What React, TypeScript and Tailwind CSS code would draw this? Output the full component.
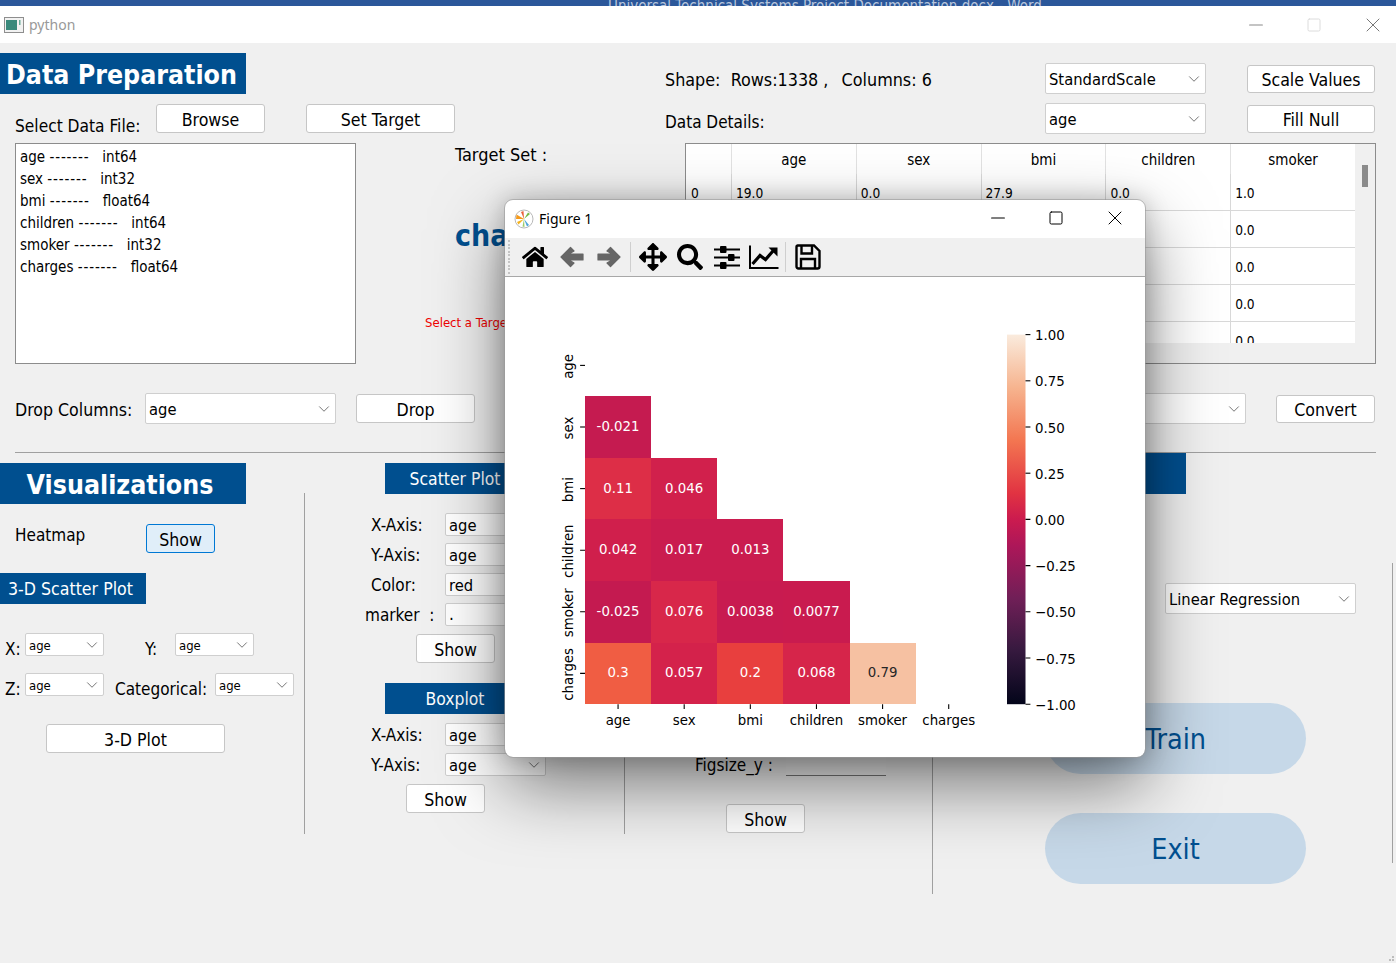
import React from 'react';
import { ChevronDown, Minus, Square, X } from 'lucide-react';
import { FaArrowsAlt, FaHome, FaSearch } from 'react-icons/fa';

const columnsList = [
  ['age', 'int64'],
  ['sex', 'int32'],
  ['bmi', 'float64'],
  ['children', 'int64'],
  ['smoker', 'int32'],
  ['charges', 'float64'],
];

const tableHeaders = ['age', 'sex', 'bmi', 'children', 'smoker'];
const tableRows = [
  ['19.0', '0.0', '27.9', '0.0', '1.0'],
  ['18.0', '1.0', '33.77', '1.0', '0.0'],
  ['28.0', '1.0', '33.0', '3.0', '0.0'],
  ['33.0', '1.0', '22.705', '0.0', '0.0'],
  ['32.0', '1.0', '28.88', '0.0', '0.0'],
];

const labels = ['age', 'sex', 'bmi', 'children', 'smoker', 'charges'];

// value, cell colour
const heatmap: [string, string][][] = [
  [],
  [['-0.021', '#c51b50']],
  [['0.11', '#dd2e47'], ['0.046', '#d1204c']],
  [['0.042', '#d01f4c'], ['0.017', '#ca1c4f'], ['0.013', '#ca1c4f']],
  [['-0.025', '#c41a50'], ['0.076', '#d8274a'], ['0.0038', '#c81b50'], ['0.0077', '#c91b4f']],
  [['0.3', '#f05d43'], ['0.057', '#d4224b'], ['0.2', '#e83f3e'], ['0.068', '#d6254a'], ['0.79', '#f6c1a2']],
];

const colorbarTicks = ['1.00', '0.75', '0.50', '0.25', '0.00', '\u22120.25', '\u22120.50', '\u22120.75', '\u22121.00'];

const Btn = ({ className, children }: { className: string; children: React.ReactNode }) => (
  <button className={`h-[29px] pt-[4px] bg-white border border-[#c6c6c6] rounded-[3px] text-[17.6px] leading-none text-black ${className}`}>
    {children}
  </button>
);

const Combo = ({ value, className, small }: { value: string; className: string; small?: boolean }) => (
  <div className={`flex items-center justify-between bg-white border border-[#cfcfcf] rounded-[2px] ${className}`}>
    <span className={small ? 'pl-[3px] pt-[2px] text-[13px]' : 'pl-[3px] pt-[4px] text-[16.4px]'}>{value}</span>
    <ChevronDown size={18} strokeWidth={0.9} className="mr-[2px] text-[#333] shrink-0" />
  </div>
);

const Banner = ({ className, children }: { className: string; children?: React.ReactNode }) => (
  <div className={`flex items-center justify-center pt-[2px] bg-[#004f8f] text-white ${className}`}>{children}</div>
);

const FieldRow = ({ label, value, className, combo }: { label: string; value: string; className: string; combo?: boolean }) => (
  <div className={`flex h-[23px] ${className}`}>
    <span className="ml-[66px] w-[74px] pt-[1px] whitespace-nowrap leading-[23px]">{label}</span>
    {combo ? (
      <Combo value={value} className="w-[101px] h-[23px]" />
    ) : (
      <div className="w-[101px] h-[23px] bg-white border border-[#cfcfcf] rounded-[2px] pl-[3px] pt-[1px] text-[16.4px] leading-[21px]">{value}</div>
    )}
  </div>
);

const ArrowIcon = ({ flip }: { flip?: boolean }) => (
  <svg width="26" height="24" viewBox="0 0 26 24" className={flip ? '-scale-x-100' : ''}>
    <path d="M2 12 L11.5 2.5 L15 6 L10 9 H24 V15 H10 L15 18 L11.5 21.5 Z" fill="#666" stroke="#666" strokeWidth="1.2" strokeLinejoin="round" />
  </svg>
);

const SlidersIcon = () => (
  <svg width="26" height="26" viewBox="0 0 26 26" fill="black">
    <rect x="0" y="4.5" width="26" height="2" />
    <rect x="0" y="12.5" width="26" height="2" />
    <rect x="0" y="20.5" width="26" height="2" />
    <rect x="6" y="2" width="6.5" height="7" rx="1" />
    <rect x="14" y="10" width="6.5" height="7" rx="1" />
    <rect x="6" y="18" width="6.5" height="7" rx="1" />
  </svg>
);

const ChartIcon = () => (
  <svg width="30" height="26" viewBox="0 0 30 26" fill="none" stroke="black">
    <path d="M1 1.5 V24 H29.5" strokeWidth="2" />
    <path d="M3.5 20 L11 11.5 L16.5 15.5 L24 7" strokeWidth="3.2" />
    <path d="M19.5 3.5 H28.5 V12.5 Z" fill="black" stroke="none" />
  </svg>
);

const SaveIcon = () => (
  <svg width="26" height="26" viewBox="0 0 26 26" fill="none" stroke="black" strokeWidth="2.4">
    <path d="M2.2 1.5 H19 L24.5 7 V22.5 Q24.5 24.5 22.5 24.5 H3.5 Q1.5 24.5 1.5 22.5 V3 Q1.5 1.5 3 1.5 Z" />
    <path d="M6.5 2 V9.5 H17 V2" />
    <path d="M6 24 V15 H20 V24" />
  </svg>
);

const MplLogo = () => (
  <svg width="20" height="20" viewBox="0 0 20 20">
    <circle cx="10" cy="10" r="9" fill="white" stroke="#b8b8b8" strokeWidth="1" />
    <path d="M10 10 L2.5 5.5 L2 10 Z" fill="#f59a1b" />
    <path d="M10 10 L3 13 L4.5 15.5 Z" fill="#f5b31b" />
    <path d="M10 10 L7 3 L9.5 2 Z" fill="#e9603a" />
    <path d="M10 10 L16 5 L14 3.5 Z" fill="#76b947" />
    <path d="M10 10 L13 17.5 L15 16 Z" fill="#4ea5d9" />
    <path d="M10 10 L8.5 17.5 L10.5 18 Z" fill="#9ccc65" />
  </svg>
);

const HeatmapChart = () => {
  const left = 80;
  const top = 57.6;
  const cellW = 66.13;
  const cellH = 61.6;
  const gx = (c: number) => Math.round(left + c * cellW);
  const gy = (r: number) => Math.round(top + r * cellH);
  return (
    <svg width="640" height="480" viewBox="0 0 640 480" className="block" fontFamily="'DejaVu Sans', sans-serif" fontSize="13.33">
      <defs>
        <linearGradient id="rocket" x1="0" y1="1" x2="0" y2="0">
          <stop offset="0" stopColor="#03051a" />
          <stop offset="0.143" stopColor="#35193e" />
          <stop offset="0.286" stopColor="#701f57" />
          <stop offset="0.429" stopColor="#ad1759" />
          <stop offset="0.5" stopColor="#cb1b4f" />
          <stop offset="0.571" stopColor="#e13342" />
          <stop offset="0.714" stopColor="#f37651" />
          <stop offset="0.857" stopColor="#f6b48f" />
          <stop offset="1" stopColor="#faebdd" />
        </linearGradient>
      </defs>
      {heatmap.map((row, r) =>
        row.map(([value, color], c) => (
          <g key={`${r}-${c}`}>
            <rect x={gx(c)} y={gy(r)} width={gx(c + 1) - gx(c)} height={gy(r + 1) - gy(r)} fill={color} />
            <text
              x={left + (c + 0.5) * cellW}
              y={top + (r + 0.5) * cellH + 4}
              textAnchor="middle"
              fill={value === '0.79' ? '#262626' : 'white'}
            >
              {value}
            </text>
          </g>
        ))
      )}
      {labels.map((label, i) => (
        <g key={label}>
          <line x1={left - 4.9} x2={left} y1={top + (i + 0.5) * cellH} y2={top + (i + 0.5) * cellH} stroke="black" strokeWidth="1.1" />
          <text
            textAnchor="middle"
            transform={`translate(68 ${top + (i + 0.5) * cellH + 1}) rotate(-90)`}
            fill="#000"
          >
            {label}
          </text>
          <line x1={left + (i + 0.5) * cellW} x2={left + (i + 0.5) * cellW} y1={427.2} y2={432} stroke="black" strokeWidth="1.1" />
          <text x={left + (i + 0.5) * cellW} y={448} textAnchor="middle" fill="#000">
            {label}
          </text>
        </g>
      ))}
      <rect x="502" y={top} width="18.5" height={369.6} fill="url(#rocket)" />
      {colorbarTicks.map((tick, i) => (
        <g key={tick}>
          <line x1="520.5" x2="525.4" y1={top + i * 46.2} y2={top + i * 46.2} stroke="black" strokeWidth="1.1" />
          <text x="530" y={top + i * 46.2 + 5.5} fill="#000">
            {tick}
          </text>
        </g>
      ))}
    </svg>
  );
};

const FigureWindow = () => (
  <div className="absolute left-[505px] top-[200px] w-[640px] h-[557px] bg-white rounded-[8px] overflow-hidden shadow-[0_28px_70px_rgba(0,0,0,0.5),0_0_24px_rgba(0,0,0,0.22)] outline outline-[#9a9a9a]/60">
    <div className="flex items-center h-[38px] bg-white">
      <div className="ml-[9px]">
        <MplLogo />
      </div>
      <span className="ml-[5px] -mt-[2px] text-[14px] text-black font-['Noto_Sans',sans-serif]">Figure 1</span>
      <div className="ml-auto -mt-[2px] flex items-center text-black">
        <Minus size={22} strokeWidth={1.1} className="mr-[39px]" />
        <Square size={16} strokeWidth={1.5} className="mr-[39px]" />
        <X size={24} strokeWidth={1} className="mr-[18px]" />
      </div>
    </div>
    <div className="flex items-center h-[39px] bg-[#f0f0f0] border-b border-[#a8a8a8]">
      <div className="w-[11px] h-[34px] flex flex-col justify-between pl-[3px] shrink-0">
        {Array.from({ length: 10 }).map((_, i) => (
          <span key={i} className="block w-[2px] h-[2px] bg-[#c4c4c4]" />
        ))}
      </div>
      <span className="w-[37px] flex justify-center text-black"><FaHome size={26} /></span>
      <span className="w-[37px] flex justify-center"><ArrowIcon /></span>
      <span className="w-[37px] flex justify-center"><ArrowIcon flip /></span>
      <span className="w-[7px] flex justify-start"><span className="block w-px h-[30px] bg-[#cfcfcf] ml-[3px]" /></span>
      <span className="w-[37px] flex justify-center text-black"><FaArrowsAlt size={28} /></span>
      <span className="w-[37px] flex justify-center text-black"><FaSearch size={26} /></span>
      <span className="w-[37px] flex justify-center"><SlidersIcon /></span>
      <span className="w-[37px] flex justify-center"><ChartIcon /></span>
      <span className="w-[7px] flex justify-start"><span className="block w-px h-[30px] bg-[#cfcfcf] ml-[3px]" /></span>
      <span className="w-[37px] flex justify-center"><SaveIcon /></span>
    </div>
    <HeatmapChart />
  </div>
);

const DataPreparation = () => (
  <div className="flex h-[409px]">
    <div className="w-[665px] shrink-0">
      <Banner className="mt-[10px] w-[246px] h-[41px] !justify-start pl-[6px] text-[26.5px] font-bold whitespace-nowrap">Data Preparation</Banner>
      <div className="flex mt-[10px] h-[29px]">
        <span className="ml-[15px] w-[141px] mt-[11px] text-[17.2px] leading-[22px]">Select Data File:</span>
        <Btn className="w-[109px]">Browse</Btn>
        <Btn className="w-[149px] ml-[41px]">Set Target</Btn>
      </div>
      <div className="flex mt-[10px] h-[221px]">
        <div className="ml-[15px] w-[341px] h-[221px] bg-white border border-[#8c8c8c] pl-[4px] pt-[2px] text-[15px] leading-[22px] shrink-0">
          {columnsList.map(([name, type]) => (
            <div key={name} className="whitespace-pre">
              {name} <span className="tracking-[0.85px]">-------</span>{`   ${type}`}
            </div>
          ))}
        </div>
        <div className="ml-[69px] flex flex-col">
          <span className="ml-[30px] text-[18px] leading-[24px] whitespace-nowrap">Target Set :</span>
          <span className="ml-[30px] mt-[47px] text-[30px] leading-[44px] font-bold text-[#004f8f]">charges</span>
          <span className="mt-[56px] text-[13px] leading-[18px] text-[#f00000] whitespace-nowrap">Select a Target</span>
        </div>
      </div>
      <div className="flex items-center mt-[29px] h-[31px]">
        <span className="ml-[15px] w-[130px] pt-[4px] text-[17.6px] whitespace-nowrap">Drop Columns:</span>
        <Combo value="age" className="w-[191px] h-[31px]" />
        <Btn className="w-[119px] ml-[20px]">Drop</Btn>
      </div>
    </div>
    <div className="flex-1 min-w-0">
      <div className="flex items-center mt-[20px] h-[31px]">
        <span className="w-[380px] pt-[4px] text-[17.8px] whitespace-pre">
          {'Shape:  Rows:1338 ,  '}
          <span className="ml-[3px]">Columns: 6</span>
        </span>
        <Combo value="StandardScale" className="w-[161px] h-[31px]" />
        <Btn className="w-[128px] ml-[41px] !h-[28px]">Scale Values</Btn>
      </div>
      <div className="flex items-center mt-[9px] h-[31px]">
        <span className="w-[380px] pt-[8px]">Data Details:</span>
        <Combo value="age" className="w-[161px] h-[31px]" />
        <Btn className="w-[128px] ml-[41px] !h-[28px]">Fill Null</Btn>
      </div>
      <div className="flex ml-[20px] mt-[9px] w-[691px] h-[221px] bg-[#f0f0f0] border border-[#8c8c8c]">
        <div className="w-[669px] h-[199px] bg-white overflow-hidden text-[15px] shrink-0">
          <div className="flex h-[30px]">
            <div className="w-[45px]" />
            {tableHeaders.map((h) => (
              <div key={h} className="w-[125px] border-l border-[#e2e2e2] pt-[7px] text-center leading-[18px]">{h}</div>
            ))}
          </div>
          {tableRows.map((row, r) => (
            <div key={r} className="flex h-[37px] border-b border-[#d8d8d8] text-[13.6px] leading-[38px]">
              <div className="w-[45px] pl-[5px]">{r}</div>
              {row.map((cell, c) => (
                <div key={c} className="w-[125px] border-l border-[#d8d8d8] pl-[4px]">{cell}</div>
              ))}
            </div>
          ))}
        </div>
        <div className="flex-1 pl-[7px] pt-[21px]">
          <div className="w-[6px] h-[22px] bg-[#8b8b8b]" />
        </div>
      </div>
      <div className="flex items-center justify-end mt-[29px] h-[31px] pr-[21px]">
        <Combo value="int" className="w-[201px] h-[31px]" />
        <Btn className="w-[99px] ml-[30px] !h-[28px]">Convert</Btn>
      </div>
    </div>
  </div>
);

const Divider = ({ className }: { className: string }) => <div className={`w-px bg-[#a0a0a0] shrink-0 ${className}`} />;

const Visualizations = () => (
  <div className="flex h-[467px]">
    {/* 3-D and heatmap */}
    <div className="w-[304px] shrink-0">
      <Banner className="mt-[10px] w-[246px] h-[41px] pr-[6px] text-[26.5px] font-bold">Visualizations</Banner>
      <div className="flex mt-[20px] h-[29px]">
        <span className="ml-[15px] w-[131px] leading-[22px]">Heatmap</span>
        <button className="w-[69px] h-[29px] pt-[4px] bg-[#e0eef9] border border-[#0078d4] rounded-[3px] text-[17.6px] leading-none">Show</button>
      </div>
      <Banner className="mt-[20px] w-[146px] h-[31px] pr-[5px] text-[17.6px]">3-D Scatter Plot</Banner>
      <div className="flex mt-[29px] h-[23px]">
        <span className="ml-[5px] w-[20px] mt-[5px] leading-[22px]">X:</span>
        <Combo small value="age" className="w-[79px] h-[23px]" />
        <span className="ml-[41px] w-[30px] mt-[5px] leading-[22px]">Y:</span>
        <Combo small value="age" className="w-[79px] h-[23px]" />
      </div>
      <div className="flex mt-[17px] h-[23px]">
        <span className="ml-[5px] w-[20px] mt-[5px] leading-[22px]">Z:</span>
        <Combo small value="age" className="w-[79px] h-[23px]" />
        <span className="ml-[11px] w-[100px] mt-[5px] leading-[22px] whitespace-nowrap">Categorical:</span>
        <Combo small value="age" className="w-[79px] h-[23px]" />
      </div>
      <Btn className="block mt-[28px] ml-[46px] w-[179px]">3-D Plot</Btn>
    </div>
    <Divider className="mt-[40px] h-[341px]" />

    {/* scatter and boxplot */}
    <div className="w-[319px] shrink-0">
      <Banner className="mt-[10px] ml-[80px] w-[140px] h-[31px] text-[17.4px]">Scatter Plot</Banner>
      <FieldRow combo label="X-Axis:" value="age" className="mt-[19px]" />
      <FieldRow combo label="Y-Axis:" value="age" className="mt-[7px]" />
      <FieldRow label="Color:" value="red" className="mt-[7px]" />
      <div className="flex h-[23px] mt-[7px]">
        <span className="ml-[60px] w-[80px] pt-[1px] whitespace-pre leading-[23px]">{'marker  :'}</span>
        <div className="w-[101px] h-[23px] bg-white border border-[#cfcfcf] rounded-[2px] pl-[3px] leading-[21px]">.</div>
      </div>
      <Btn className="block mt-[8px] ml-[111px] w-[79px]">Show</Btn>
      <Banner className="mt-[20px] ml-[80px] w-[140px] h-[31px] text-[17.4px]">Boxplot</Banner>
      <FieldRow combo label="X-Axis:" value="age" className="mt-[9px]" />
      <FieldRow combo label="Y-Axis:" value="age" className="mt-[7px]" />
      <Btn className="block mt-[8px] ml-[101px] w-[79px]">Show</Btn>
    </div>
    <Divider className="mt-[40px] h-[341px]" />

    {/* line plot settings */}
    <div className="w-[307px] shrink-0">
      <div className="flex mt-[300px] h-[23px]">
        <span className="ml-[70px] w-[91px] whitespace-nowrap leading-[23px] pt-[1px]">Figsize_y :</span>
        <div className="w-[100px] h-[23px] bg-[#f2f2f2] border-b border-[#777]" />
      </div>
      <Btn className="block mt-[28px] ml-[101px] w-[79px]">Show</Btn>
    </div>
    <Divider className="mt-[40px] h-[401px]" />

    {/* model */}
    <div className="w-[459px] shrink-0">
      <Banner className="ml-[62px] w-[191px] h-[41px]" />
      <Combo value="Linear Regression" className="ml-[232px] mt-[89px] w-[191px] h-[31px]" />
      <button className="block mt-[89px] ml-[112px] w-[261px] h-[71px] pt-[4px] rounded-full bg-[#c6d8e8] text-[28.5px] text-[#004f8f]">Train</button>
      <button className="block mt-[39px] ml-[112px] w-[261px] h-[71px] pt-[4px] rounded-full bg-[#c6d8e8] text-[28.5px] text-[#004f8f]">Exit</button>
    </div>
    <Divider className="mt-[110px] h-[300px]" />
  </div>
);

export default function App() {
  return (
    <div className="relative w-[1396px] h-[963px] overflow-hidden bg-[#f0f0f0] text-black text-[17px] font-['DejaVu_Sans_Condensed','Noto_Sans',sans-serif]">
      {/* word window behind */}
      <div className="h-[6px] bg-[#2b579a] overflow-hidden">
        <div className="ml-[608px] -mt-[2px] text-[15px] leading-[16px] text-[#b9c6dc] whitespace-nowrap">
          Universal Technical Systems Project Documentation.docx - Word
        </div>
      </div>

      {/* title bar */}
      <div className="flex items-center h-[37px] bg-white">
        <svg width="20" height="16" viewBox="0 0 20 16" className="ml-[4px]">
          <rect x="0.5" y="0.5" width="19" height="15" fill="#f2f2f2" stroke="#8e8e8e" />
          <rect x="2" y="3" width="11" height="10" fill="#3a8a7c" />
          <rect x="15" y="3" width="1.5" height="5" fill="#6bae9c" />
        </svg>
        <span className="ml-[5px] text-[14px] text-[#999] font-['Noto_Sans',sans-serif]">python</span>
        <div className="ml-auto flex items-center">
          <Minus size={22} strokeWidth={1.1} className="mr-[39px] text-[#8a8a8a]" />
          <Square size={16} strokeWidth={1.5} className="mr-[39px] text-[#dcdcdc]" />
          <X size={24} strokeWidth={1} className="mr-[11px] text-[#777]" />
        </div>
      </div>

      <DataPreparation />
      <div className="ml-[15px] w-[1361px] h-px bg-[#a0a0a0]" />
      <Visualizations />

      <div className="absolute right-[2px] bottom-[2px] grid grid-cols-3 gap-px">
        <span className="w-[2px] h-[2px]" />
        <span className="w-[2px] h-[2px]" />
        <span className="w-[2px] h-[2px] bg-[#bdbdbd]" />
        <span className="w-[2px] h-[2px]" />
        <span className="w-[2px] h-[2px] bg-[#bdbdbd]" />
        <span className="w-[2px] h-[2px] bg-[#bdbdbd]" />
      </div>

      <FigureWindow />
    </div>
  );
}
